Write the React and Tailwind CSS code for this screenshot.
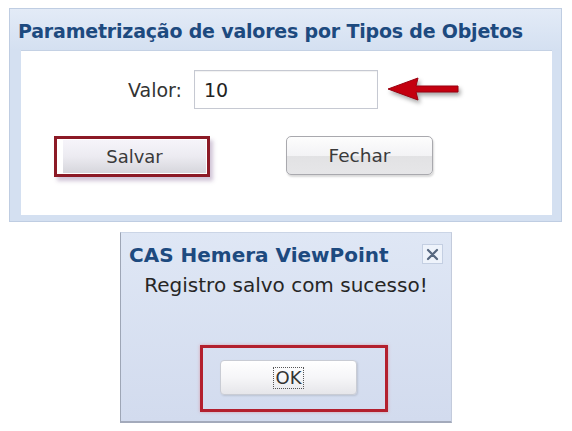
export default function App() {
  const sans = { fontFamily: '"DejaVu Sans", Verdana, sans-serif' };
  return (
    <div className="w-[572px] h-[431px] bg-white overflow-hidden" style={sans}>
      {/* Top panel */}
      <div className="ml-[9px] mt-[8px] w-[553px] h-[214px] bg-[#d4e0f1] border border-[#bfcde2] flex flex-col">
        <div className="h-[41px] pl-[8px] pt-[10px] bg-gradient-to-b from-[#e3ebf7] to-[#d4e0f1]">
          <div className="text-[19px] leading-[24px] font-bold text-[#1d4a7f] tracking-[-0.2px] whitespace-nowrap">
            Parametrização de valores por Tipos de Objetos
          </div>
        </div>
        <div className="ml-[11px] w-[531px] h-[165px] bg-white border-t border-[#c4d1e4] flex flex-col">
          <div className="flex items-center pt-[19px] pl-[107px]">
            <span className="text-[19px] leading-[24px] text-[#333]">Valor:</span>
            <div className="ml-[12px] w-[184px] h-[39px] border border-[#c6c9d2] bg-white shadow-[inset_0_1px_1px_rgba(0,0,0,0.06)] flex items-center pl-[9px]">
              <span className="text-[19px] leading-[24px] text-[#222]">10</span>
            </div>
            <svg
              width="74"
              height="28"
              viewBox="0 0 74 28"
              className="ml-[10px] mt-[2px] drop-shadow-[2px_3px_2px_rgba(0,0,0,0.35)]"
            >
              <path
                d="M0 12 L30 1 L28 9 L70 9 L70 15 L28 15 L30 23 Z"
                fill="#c4000f"
                stroke="#9a0010"
                strokeWidth="1"
                strokeLinejoin="round"
              />
            </svg>
          </div>
          <div className="flex items-start mt-[27px] pl-[33px]">
            <div className="w-[156px] h-[41px] border-[3px] border-[#8c1a26] shadow-[3px_4px_4px_rgba(120,90,140,0.35)] flex items-stretch bg-white">
              <div className="ml-[6px] mr-[1px] my-[1px] flex-1 bg-gradient-to-b from-[#f6f4fa] via-[#ecebf1] to-[#d6d6dc] flex items-center justify-center">
                <span className="text-[18px] leading-[22px] text-[#3a3a3a]">Salvar</span>
              </div>
            </div>
            <div className="ml-[76px] w-[147px] h-[39px] rounded-[5px] border border-[#a9a9ae] shadow-[1px_2px_2px_rgba(0,0,0,0.15)] bg-[linear-gradient(to_bottom,#fdfdfd_0%,#f3f3f5_50%,#e2e2e4_52%,#e6e6e8_100%)] flex items-center justify-center">
              <span className="text-[18.5px] leading-[22px] text-[#3a3a3a]">Fechar</span>
            </div>
          </div>
        </div>
      </div>

      {/* Dialog */}
      <div className="ml-[120px] mt-[10px] w-[332px] h-[191px] bg-gradient-to-b from-[#dfe7f5] to-[#d2dbee] border-l border-b-2 border-t border-r border-l-[#9ea6b6] border-b-[#a3aabb] border-t-[#cbd5e6] border-r-[#c3cbdc] flex flex-col">
        <div className="flex items-start justify-between pl-[8px] pr-[8px] pt-[10px]">
          <span className="text-[20px] leading-[24px] font-bold text-[#1d4a7f] whitespace-nowrap">
            CAS Hemera ViewPoint
          </span>
          <div className="w-[21px] h-[20px] mt-[1px] bg-[#eef3fb] border border-[#c4cfe2] flex items-center justify-center">
            <svg width="13" height="13" viewBox="0 0 13 13">
              <path d="M2 2 L11 11 M11 2 L2 11" stroke="#56677f" strokeWidth="2.2" strokeLinecap="round" />
            </svg>
          </div>
        </div>
        <div className="mt-[6px] text-center text-[20px] leading-[24px] text-[#262626] whitespace-nowrap">
          Registro salvo com sucesso!
        </div>
        <div className="ml-[79px] mt-[48px] w-[188px] h-[67px] border-[3px] border-[#b3202e] shadow-[0_0_3px_rgba(220,120,130,0.6)] flex flex-col">
          <div className="ml-[17px] mt-[12px] w-[137px] h-[35px] rounded-[4px] border border-[#c9ccd4] bg-gradient-to-b from-white via-[#f6f6f8] to-[#e6e6ea] shadow-[1px_1px_2px_rgba(0,0,0,0.12)] flex items-center justify-center">
            <span className="px-[2px] border border-dotted border-[#555] text-[18px] leading-[20px] text-[#333]">OK</span>
          </div>
        </div>
      </div>
    </div>
  );
}
